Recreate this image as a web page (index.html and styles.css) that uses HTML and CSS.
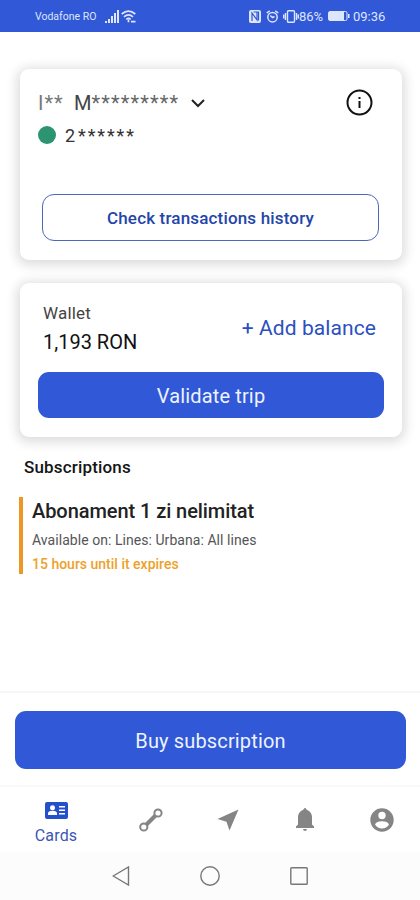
FILE: index.html
```html
<!DOCTYPE html>
<html lang="en">
<head>
<meta charset="utf-8">
<title>Cards</title>
<link rel="stylesheet" href="styles.css">
</head>
<body>
<div class="screen">
  <header class="status">
    <span class="carrier">Vodafone RO</span>
    <svg class="signal" width="14" height="13" viewBox="0 0 14 13" fill="currentColor"><path d="M0 11h2v2H0zM3 9h2v4H3zM6 6h2v7H6zM9 3h2v10H9zM12 0h2v13h-2z"/></svg>
    <svg class="wifi" width="15" height="13" viewBox="0 0 15 13" fill="none" stroke="currentColor" stroke-width="1.7"><path d="M.7 4Q7.500-1.800 14.300 4M3 6.800Q7.500 3 12 6.800M5.300 9.300Q7.500 7.600 9.700 9.300"/><path d="M7.500 9.500v2.800M10 11.700h4.500"/></svg>
    <span class="grow"></span>
    <svg class="nfc" width="12" height="13" viewBox="0 0 12 13"><rect width="12" height="13" rx="2" fill="currentColor"/><path d="M3 11V3l5 7V2M4.500 2H9.500V10.500" fill="none" stroke="#3158d6" stroke-width="1.200"/></svg>
    <svg class="alarm" width="13" height="13" viewBox="0 0 13 13" fill="none" stroke="currentColor" stroke-width="1.500"><circle cx="6.500" cy="7.200" r="4.700"/><path d="M.7 3L3.700.8M12.300 3L9.300.8M4.300 5.500l2.200 2 2-1"/></svg>
    <svg class="vibrate" width="16" height="13" viewBox="0 0 16 13" fill="none" stroke="currentColor" stroke-width="1.400"><rect x="4.500" y=".8" width="7" height="11.400" rx="1"/><path d="M2.500 3v7M.7 4.500v4M13.500 3v7M15.300 4.500v4"/></svg>
    <span class="percent">86%</span>
    <svg class="battery" width="22" height="10" viewBox="0 0 22 10"><rect x=".5" y=".5" width="18.500" height="9" rx="1.500" fill="none" stroke="currentColor"/><path d="M1 1h15v8H1zM20 3h1.500v4H20z" fill="currentColor"/></svg>
    <span class="time">09:36</span>
  </header>

  <main class="content">
    <section class="card account">
      <div class="owner">
        <div class="owner-name"><span class="initial">I**</span><span class="surname">M<span class="stars">*********</span></span>
          <svg class="chevron" width="14" height="9" viewBox="0 0 14 9" fill="none" stroke="#222" stroke-width="2"><path d="M1 1l6 6 6-6"/></svg>
        </div>
        <svg class="info" width="27" height="27" viewBox="0 0 27 27"><circle cx="13.500" cy="13.500" r="12" fill="none" stroke="#111" stroke-width="2"/><path d="M12.500 8h2v2h-2zM12.500 12h2v7h-2z" fill="#111"/></svg>
      </div>
      <div class="number"><i class="dot"></i><span class="digit">2</span><span class="mask">******</span></div>
      <button class="history">Check transactions history</button>
    </section>

    <section class="card wallet">
      <div class="balance">
        <div><div class="label">Wallet</div><div class="amount">1,193 RON</div></div>
        <div class="add">+ Add balance</div>
      </div>
      <button class="validate">Validate trip</button>
    </section>

    <h2 class="heading">Subscriptions</h2>
    <article class="subscription">
      <div class="sub-title">Abonament 1 zi nelimitat</div>
      <div class="sub-lines">Available on: Lines: Urbana: All lines</div>
      <div class="sub-expiry">15 hours until it expires</div>
    </article>
  </main>

  <div class="purchase"><button class="buy">Buy subscription</button></div>

  <nav class="tabs">
    <div class="tab active">
      <svg width="23" height="17" viewBox="0 0 23 17"><rect width="23" height="17" rx="2" fill="#2550cb"/><g fill="#fff"><circle cx="7.500" cy="5.800" r="2.500"/><path d="M3 13v-1.500q0-2.700 4.500-2.700T12 11.500V13zM14 4h6v1.500h-6zM14 7.500h6V9h-6zM14 11h6v1.500h-6z"/></g></svg>
      <span class="tab-label">Cards</span>
    </div>
    <div class="tab"><svg width="24" height="24" viewBox="0 0 24 24" fill="none" stroke="#858585"><path d="M7.500 16.500l9-9" stroke-width="4"/><circle cx="4.800" cy="19" r="3.600" stroke-width="2"/><circle cx="19" cy="5" r="3.600" stroke-width="2"/></svg></div>
    <div class="tab"><svg width="22" height="22" viewBox="0 0 22 22" fill="#858585"><path d="M21.500.5L12.500 21.500 9.500 12.800.5 10z"/></svg></div>
    <div class="tab"><svg width="20" height="23" viewBox="0 0 20 23" fill="#858585"><path d="M10 0q1.200 0 1.700 1.800Q17 4 17 9v7.500L19 18.500V20H1v-1.500l2-2V9Q3 4 8.300 1.800 8.800 0 10 0zM8 21h4q-.3 2-2 2t-2-2z"/></svg></div>
    <div class="tab"><svg width="24" height="24" viewBox="0 0 24 24"><circle cx="12" cy="12" r="11.700" fill="#858585"/><circle cx="12" cy="7.500" r="3.700" fill="#fff"/><path d="M5 16.500q1.500-3.200 7-3.200t7 3.200q-2.500 4-7 4t-7-4z" fill="#fff"/></svg></div>
  </nav>

  <footer class="system">
    <svg width="18" height="20" viewBox="0 0 18 20"><path d="M16.500 1v18L1.200 10z"/></svg>
    <svg width="20" height="20" viewBox="0 0 20 20"><circle cx="10" cy="10" r="9.200"/></svg>
    <svg width="18" height="18" viewBox="0 0 18 18"><rect x=".8" y=".8" width="16.400" height="16.400" rx=".8"/></svg>
  </footer>
</div>
</body>
</html>
```
FILE: styles.css
```css
* { box-sizing: border-box; }
body { margin: 0; font-family: Roboto, sans-serif; background: #fff; }
svg { display: block; flex: none; }
button { display: block; font-family: inherit; padding: 1px 0 0; border: 0; }
.screen { width: 420px; height: 900px; display: flex; flex-direction: column; overflow: hidden; }

.status { height: 32px; flex: none; display: flex; align-items: center; padding: 0 34px 0 35px; background: #3158d6; color: #dce6ff; white-space: nowrap; }
.carrier { font-size: 10.500px; width: 70px; }
.wifi { margin-left: 2px; }
.grow { flex: 1; }
.alarm { margin-left: 5px; }
.vibrate { margin-left: 4px; }
.percent { font-size: 13px; width: 26px; margin-left: 0; }
.battery { margin-left: 3px; }
.time { font-size: 13px; margin-left: 3px; width: 33px; }

.content { flex: 1; padding: 37px 18px 0 20px; }
.card { background: #fff; border-radius: 9px; box-shadow: 0 2px 12px 3px rgba(0,0,0,.14); }
.account { height: 191px; padding: 20px 24px 0 18px; }
.owner { display: flex; justify-content: space-between; height: 28px; padding-right: 5px; }
.owner-name { display: flex; align-items: center; font-size: 20px; color: #444; height: 28px; }
.initial { width: 36px; letter-spacing: 1px; color: #777; }
.surname { width: 117px; white-space: nowrap; }
.stars { letter-spacing: 1.150px; color: #666; }
.number { display: flex; align-items: center; height: 36px; color: #333; }
.dot { width: 18px; height: 18px; border-radius: 50%; background: #2c9470; }
.digit { font-size: 18px; margin-left: 9px; width: 13px; }
.mask { font-size: 18px; letter-spacing: 1.900px; }
.history { width: 337px; height: 47px; margin: 41px 0 0 4px; border: 1px solid #4b67b8; border-radius: 12px; background: #fff; color: #2445a9; font-size: 17px; font-weight: 500; letter-spacing: .17px; }

.wallet { height: 154px; margin-top: 23px; padding: 20px 18px 0; }
.balance { display: flex; justify-content: space-between; height: 69px; padding: 0 8px 0 5px; }
.label { font-size: 17px; line-height: 20px; letter-spacing: .2px; color: #444; }
.amount { font-size: 20px; line-height: 24px; margin-top: 7px; color: #111; }
.add { font-size: 21px; line-height: 24px; margin-top: 13px; letter-spacing: .08px; color: #2b50bd; }
.validate { width: 346px; height: 46px; border-radius: 11px; background: #3158d6; color: #edf3ff; font-size: 20px; letter-spacing: .15px; padding-top: 2px; }

.heading { margin: 20px 0 0 4px; font-size: 17px; line-height: 20px; font-weight: 500; letter-spacing: .17px; color: #151515; }
.subscription { height: 77px; margin-top: 20px; border-left: 4px solid #ed9822; padding: 2px 0 0 9px; margin-left: -1px; }
.sub-title { font-size: 20px; line-height: 24px; font-weight: 500; letter-spacing: -.07px; color: #222; }
.sub-lines { font-size: 14px; line-height: 16px; margin-top: 9px; letter-spacing: .05px; color: #555; }
.sub-expiry { font-size: 14px; line-height: 16px; margin-top: 8px; font-weight: 500; color: #eda12b; }

.purchase { flex: none; height: 96px; border-top: 2px solid #f6f6f6; border-bottom: 2px solid #f9f9f9; padding: 18px 14px 0 15px; }
.buy { width: 391px; height: 58px; border-radius: 11px; background: #3158d6; color: #edf3ff; font-size: 20px; letter-spacing: .15px; padding-top: 2px; }
.tabs { flex: none; height: 65px; display: grid; grid-template-columns: 112px 78px 76px 78px 76px; }
.tab { height: 65px; display: flex; align-items: center; justify-content: center; }
.active { flex-direction: column; justify-content: flex-start; padding-top: 15px; }
.tab-label { font-size: 16px; line-height: 20px; margin-top: 7px; letter-spacing: .2px; color: #3b57b5; }
.system { flex: none; height: 48px; display: flex; align-items: center; background: #fcfcfc; padding-left: 112px; gap: 70px; }
.system path, .system circle, .system rect { fill: none; stroke: #777; stroke-width: 1.400; }
```
